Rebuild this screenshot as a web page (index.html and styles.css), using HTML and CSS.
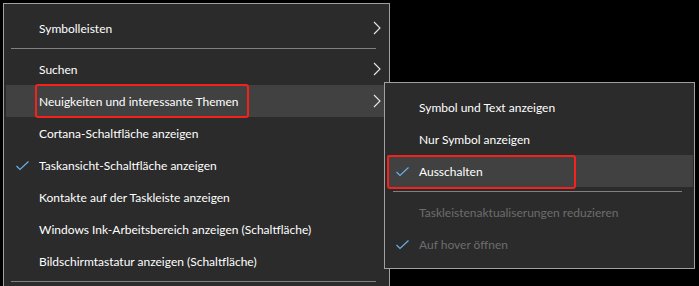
FILE: index.html
```html
<!DOCTYPE html>
<html>
<head>
<meta charset="utf-8">
<link rel="stylesheet" href="styles.css">
</head>
<body>
<div class="screen">
  <div class="menu main">
    <div class="item"><span class="label">Symbolleisten</span><svg class="chev" width="8" height="14" viewBox="0 0 8 14"><polyline points="1,1 7,7 1,13" /></svg></div>
    <div class="sep"></div>
    <div class="item"><span class="label">Suchen</span><svg class="chev" width="8" height="14" viewBox="0 0 8 14"><polyline points="1,1 7,7 1,13" /></svg></div>
    <div class="item hl"><span class="label">Neuigkeiten und interessante Themen</span><span class="redbox main-box"></span><svg class="chev" width="8" height="14" viewBox="0 0 8 14"><polyline points="1,1 7,7 1,13" /></svg></div>
    <div class="item"><span class="label">Cortana-Schaltfläche anzeigen</span></div>
    <div class="item"><svg class="check" width="13" height="10" viewBox="0 0 13 10"><polyline points="0.5,5 4,8.5 12.5,0.5" /></svg><span class="label">Taskansicht-Schaltfläche anzeigen</span></div>
    <div class="item"><span class="label">Kontakte auf der Taskleiste anzeigen</span></div>
    <div class="item"><span class="label">Windows Ink-Arbeitsbereich anzeigen (Schaltfläche)</span></div>
    <div class="item"><span class="label">Bildschirmtastatur anzeigen (Schaltfläche)</span></div>
    <div class="sep"></div>
  </div>
  <div class="menu sub">
    <div class="item"><span class="label">Symbol und Text anzeigen</span></div>
    <div class="item"><span class="label">Nur Symbol anzeigen</span></div>
    <div class="item hl"><svg class="check" width="13" height="10" viewBox="0 0 13 10"><polyline points="0.5,5 4,8.5 12.5,0.5" /></svg><span class="label">Ausschalten</span><span class="redbox sub-box"></span></div>
    <div class="sep"></div>
    <div class="item dis"><span class="label">Taskleistenaktualiserungen reduzieren</span></div>
    <div class="item dis"><svg class="check" width="13" height="10" viewBox="0 0 13 10"><polyline points="0.5,5 4,8.5 12.5,0.5" /></svg><span class="label">Auf hover öffnen</span></div>
  </div>
</div>
</body>
</html>
```
FILE: styles.css
```css
html, body {
  margin: 0;
  padding: 0;
  background: #000;
}
body {
  width: 699px;
  height: 286px;
  overflow: hidden;
  font-family: "Lato", "Noto Sans", sans-serif;
  font-size: 12px;
  color: #fff;
}
.screen {
  position: relative;
  width: 699px;
  height: 286px;
  padding: 3px 0 0 3px;
  box-sizing: border-box;
}
.menu {
  background: #2b2b2b;
  border: 1px solid #a0a0a0;
  box-sizing: border-box;
  padding: 8px 2px;
  display: flex;
  flex-direction: column;
}
.main {
  width: 387px;
}
.sub {
  position: absolute;
  left: 384px;
  top: 82px;
  width: 311px;
  height: 187px;
  padding: 8px 1px 8px 2px;
}
.item {
  position: relative;
  height: 32px;
  display: flex;
  align-items: center;
  flex-shrink: 0;
}
.main .item .label {
  position: absolute;
  left: 33px;
}
.sub .item .label {
  position: absolute;
  left: 32px;
}
.item.hl {
  background: #414141;
}
.item.dis {
  color: #6d6d6d;
}
.sep {
  height: 9px;
  flex-shrink: 0;
  display: flex;
  align-items: center;
  justify-content: center;
}
.sep::before {
  content: "";
  display: block;
  height: 1px;
  background: #808080;
}
.main .sep::before { width: 365px; margin-left: -7px; }
.sub .sep::before { width: 289px; margin-left: -6px; }
.chev {
  position: absolute;
  left: 367px;
  top: 9px;
  fill: none;
  stroke: #e8e8e8;
  stroke-width: 1.1;
}
.check {
  position: absolute;
  left: 10px;
  top: 12px;
  fill: none;
  stroke: #6aaeea;
  stroke-width: 1.2;
}
.sub .check { left: 9px; }
.redbox {
  position: absolute;
  border: 2px solid #f4211c;
  border-radius: 3px;
  box-sizing: border-box;
}
.main-box {
  left: 29px;
  top: -1px;
  width: 214px;
  height: 34px;
}
.sub-box {
  left: 0px;
  top: 0px;
  width: 189px;
  height: 34px;
}
```
